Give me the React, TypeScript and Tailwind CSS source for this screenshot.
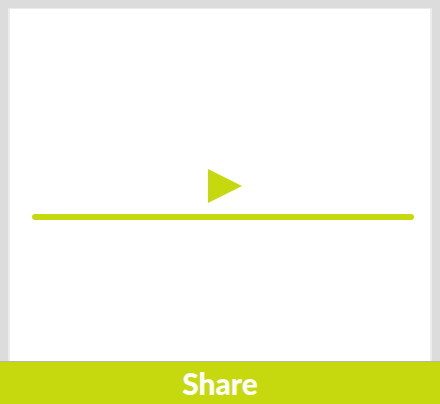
export default function App() {
  return (
    <div className="flex h-[404px] w-[440px] flex-col bg-[#dcdcdc]">
      <div className="flex flex-1 px-[8px] pt-[8px]">
        <div className="flex flex-1 flex-col border-l-2 border-r-2 border-t border-[#ececec] bg-white pl-[22px] pr-[16px] pt-[160px]">
          <div className="flex justify-center pl-[4px]">
            <svg width="34" height="34" viewBox="0 0 34 34" className="block">
              <polygon points="0,0 34,17 0,34" fill="#c6d90e" />
            </svg>
          </div>
          <div className="mt-[11px] h-[6px] w-full rounded-full bg-[#c6d90e]" />
        </div>
      </div>
      <div className="flex h-[43px] items-center justify-center border-t border-[#b8b8a0] bg-[#c6d90e]">
        <span className="text-[30px] font-black leading-none text-white" style={{ fontFamily: "Lato, sans-serif" }}>
          Share
        </span>
      </div>
    </div>
  );
}
